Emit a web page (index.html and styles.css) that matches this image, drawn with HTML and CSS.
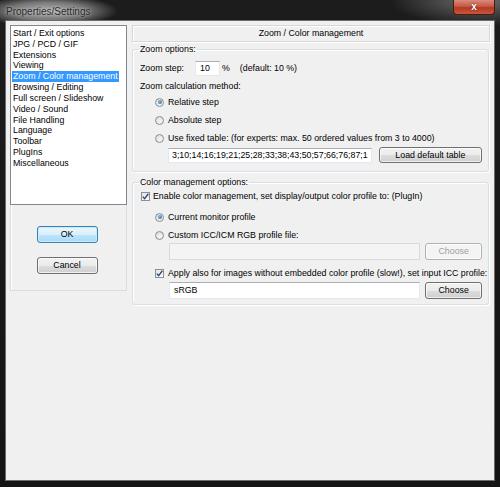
FILE: index.html
```html
<!DOCTYPE html>
<html>
<head>
<meta charset="utf-8">
<link rel="stylesheet" href="styles.css">
</head>
<body>
<div class="window">
  <div class="titlebar">
    <span class="title">Properties/Settings</span>
    <div class="close">x</div>
  </div>
  <div class="client">
    <div class="left">
      <ul class="list">
        <li><span>Start / Exit options</span></li>
        <li><span>JPG / PCD / GIF</span></li>
        <li><span>Extensions</span></li>
        <li><span>Viewing</span></li>
        <li class="sel"><span>Zoom / Color management</span></li>
        <li><span>Browsing / Editing</span></li>
        <li><span>Full screen / Slideshow</span></li>
        <li><span>Video / Sound</span></li>
        <li><span>File Handling</span></li>
        <li><span>Language</span></li>
        <li><span>Toolbar</span></li>
        <li><span>PlugIns</span></li>
        <li><span>Miscellaneous</span></li>
      </ul>
      <div class="btnbox">
        <div class="btn default">OK</div>
        <div class="btn">Cancel</div>
      </div>
    </div>
    <div class="right">
      <div class="header">Zoom / Color management</div>
      <fieldset class="group zoom">
        <legend>Zoom options:</legend>
        <div class="row step">
          <span class="steplabel">Zoom step:</span>
          <div class="input small">10</div>
          <span class="pct">%</span>
          <span class="def">(default: 10 %)</span>
        </div>
        <div class="plain method">Zoom calculation method:</div>
        <div class="row opt first"><span class="radio on"></span><span>Relative step</span></div>
        <div class="row opt"><span class="radio"></span><span>Absolute step</span></div>
        <div class="row opt"><span class="radio"></span><span>Use fixed table: (for experts: max. 50 ordered values from 3 to 4000)</span></div>
        <div class="row table">
          <div class="input tbl">3;10;14;16;19;21;25;28;33;38;43;50;57;66;76;87;1</div>
          <div class="btn load">Load default table</div>
        </div>
      </fieldset>
      <fieldset class="group color">
        <legend>Color management options:</legend>
        <div class="row chk enable"><span class="check"><svg viewBox="0 0 9 9" width="9" height="9"><path d="M1.8 4.6 L3.6 6.6 L7.4 1.8" fill="none" stroke="#2b4a86" stroke-width="1.4"/></svg></span><span>Enable color management, set display/output color profile to: (PlugIn)</span></div>
        <div class="row opt cur"><span class="radio on"></span><span>Current monitor profile</span></div>
        <div class="row opt custom"><span class="radio"></span><span>Custom ICC/ICM RGB profile file:</span></div>
        <div class="row file">
          <div class="input wide disabled"></div>
          <div class="btn choose disabled">Choose</div>
        </div>
        <div class="row chk apply"><span class="check"><svg viewBox="0 0 9 9" width="9" height="9"><path d="M1.8 4.6 L3.6 6.6 L7.4 1.8" fill="none" stroke="#2b4a86" stroke-width="1.4"/></svg></span><span>Apply also for images without embedded color profile (slow!), set input ICC profile:</span></div>
        <div class="row file last">
          <div class="input wide">sRGB</div>
          <div class="btn choose">Choose</div>
        </div>
      </fieldset>
    </div>
  </div>
</div>
</body>
</html>
```
FILE: styles.css
```css
html, body {
  margin: 0;
  padding: 0;
}
body {
  width: 500px;
  height: 487px;
  overflow: hidden;
  background: #161616;
  font-family: "Liberation Sans", Arial, sans-serif;
  font-size: 8.8px;
  line-height: 11px;
  color: #000;
}
.window {
  width: 500px;
  height: 487px;
  display: flex;
  flex-direction: column;
  background:
    radial-gradient(ellipse 70px 16px at 48px 11px, rgba(185,185,185,0.95) 0%, rgba(150,150,150,0.75) 55%, rgba(120,120,120,0) 100%),
    radial-gradient(ellipse 90px 26px at 480px 0px, rgba(130,130,130,0.8), rgba(120,120,120,0) 100%),
    linear-gradient(#1c1c1c, #141414);
  box-sizing: border-box;
}
.titlebar {
  height: 21px;
  position: relative;
  display: flex;
  align-items: center;
  padding-left: 6px;
  box-sizing: border-box;
}
.title {
  font-size: 10px;
  color: #2a2a2a;
  text-shadow: 0 0 3px rgba(230,230,230,0.8);
  margin-top: 1px;
}
.close {
  position: absolute;
  right: 5px;
  top: 0;
  width: 42px;
  height: 15px;
  box-sizing: border-box;
  border: 1px solid #4a1a12;
  border-top: none;
  border-radius: 0 0 4px 4px;
  background: linear-gradient(#d98a7c 0%, #c75a45 45%, #b23a22 55%, #c9563c 100%);
  color: #fff;
  font-weight: bold;
  font-size: 10px;
  line-height: 13px;
  text-align: center;
  text-shadow: 0 0 2px #5a1008;
}
.client {
  flex: 1;
  margin: 0 6px 7px 6px;
  background: #f0f0f0;
  display: flex;
  gap: 5px;
  padding: 4px 0 0 4px;
  box-shadow: 0 0 0 1px #6c6c6c;
}
.left {
  width: 117px;
  display: flex;
  flex-direction: column;
}
.list {
  list-style: none;
  margin: 0;
  padding: 2px 0 0 1px;
  height: 180px;
  box-sizing: border-box;
  background: #fff;
  border: 1px solid #828790;
}
.list li {
  line-height: 10.83px;
  height: 10.83px;
  white-space: nowrap;
}
.list li span {
  display: inline-block;
  padding: 0 1px;
}
.list li.sel span {
  background: #3399ff;
  color: #fff;
}
.btnbox {
  height: 86px;
  border: 1px solid #dcdcdc;
  border-top: none;
  box-shadow: inset 1px 0 #fff;
  display: flex;
  flex-direction: column;
  align-items: center;
  gap: 14px;
  padding-top: 21px;
  padding-right: 3px;
  box-sizing: border-box;
}
.btn {
  height: 17px;
  box-sizing: border-box;
  border: 1px solid #707070;
  border-radius: 3px;
  background: linear-gradient(#f2f2f2 0%, #ebebeb 50%, #dddddd 51%, #cfcfcf 100%);
  box-shadow: inset 0 0 0 1px rgba(255,255,255,0.7);
  text-align: center;
  line-height: 15px;
  white-space: nowrap;
}
.btnbox .btn {
  width: 61px;
}
.btn.default {
  border-color: #3c7fb1;
  background: linear-gradient(#eaf6fd 0%, #d9f0fc 50%, #bee6fd 51%, #a7d9f5 100%);
  box-shadow: inset 0 0 0 1px #c9ecfd;
}
.right {
  width: 358px;
  display: flex;
  flex-direction: column;
}
.header {
  height: 17px;
  box-sizing: border-box;
  border: 1px solid #d6d6d6;
  box-shadow: inset 1px 1px #fff, 1px 1px #fff;
  text-align: center;
  line-height: 15px;
}
.group {
  margin: 0;
  border: 1px solid #d5dfe5;
  border-radius: 3px;
  box-shadow: inset 1px 1px #fff, 1px 1px #fff;
  padding: 0 6px 8px 7px;
  min-width: 0;
  width: 357px;
  box-sizing: border-box;
}
.group legend {
  padding: 0 1px;
  margin-left: -1px;
  line-height: 11px;
}
.zoom {
  margin-top: 2px;
}
.color {
  margin-top: 5px;
  padding-bottom: 5px;
}
.row {
  display: flex;
  align-items: center;
  white-space: nowrap;
}
.step {
  margin-top: 6px;
  height: 15px;
}
.steplabel {
  width: 55px;
}
.input {
  box-sizing: border-box;
  background: #fff;
  border: 1px solid #e3e9ef;
  border-top-color: #abadb3;
  padding: 0 3px;
  overflow: hidden;
  white-space: nowrap;
}
.input.small {
  width: 25px;
  height: 15px;
  line-height: 13px;
  padding-left: 4px;
}
.pct {
  margin-left: 2px;
}
.def {
  margin-left: 10px;
}
.method {
  margin-top: 5px;
}
.opt {
  height: 12px;
  margin-top: 6px;
  padding-left: 15px;
  gap: 4px;
}
.opt.first {
  margin-top: 4px;
}
.radio {
  width: 9px;
  height: 9px;
  box-sizing: border-box;
  border-radius: 50%;
  border: 1px solid #8e8f8f;
  background: radial-gradient(circle at 60% 65%, #f7f7f7, #d5d5d5);
  position: relative;
  flex: none;
}
.radio.on::after {
  content: "";
  position: absolute;
  left: 1.5px;
  top: 1.5px;
  width: 4px;
  height: 4px;
  border-radius: 50%;
  background: radial-gradient(circle at 40% 35%, #78c0ee, #1f5d90);
}
.table {
  margin-top: 3px;
  height: 16px;
  padding-left: 28px;
}
.input.tbl {
  width: 205px;
  height: 15px;
  line-height: 13px;
  padding-left: 3px;
}
.btn.load {
  width: 104px;
  height: 16px;
  line-height: 14px;
  margin-left: 7px;
}
.chk {
  height: 11px;
  gap: 3px;
}
.check {
  width: 9px;
  height: 9px;
  box-sizing: border-box;
  border: 1px solid #8e8f8f;
  background: linear-gradient(135deg, #e4e4e4, #fdfdfd);
  display: flex;
  align-items: center;
  justify-content: center;
  flex: none;
}
.check svg {
  display: block;
  flex: none;
}
.enable {
  margin-top: 3px;
  padding-left: 1px;
}
.opt.cur {
  margin-top: 9px;
}
.opt.custom {
  margin-top: 6px;
}
.file {
  margin-top: 2px;
  height: 17px;
  padding-left: 29px;
}
.input.wide {
  width: 253px;
  height: 17px;
  line-height: 15px;
  padding-left: 4px;
}
.input.disabled {
  background: #f4f4f4;
  border-color: #d9d9d9;
}
.btn.choose {
  width: 57px;
  height: 17px;
  line-height: 15px;
  margin-left: 5px;
}
.btn.disabled {
  color: #a0a0a0;
  border-color: #adb2b5;
  background: #f4f4f4;
}
.apply {
  margin-top: 8px;
  padding-left: 15px;
  gap: 4px;
}
.file.last {
  margin-top: 3px;
}
```
